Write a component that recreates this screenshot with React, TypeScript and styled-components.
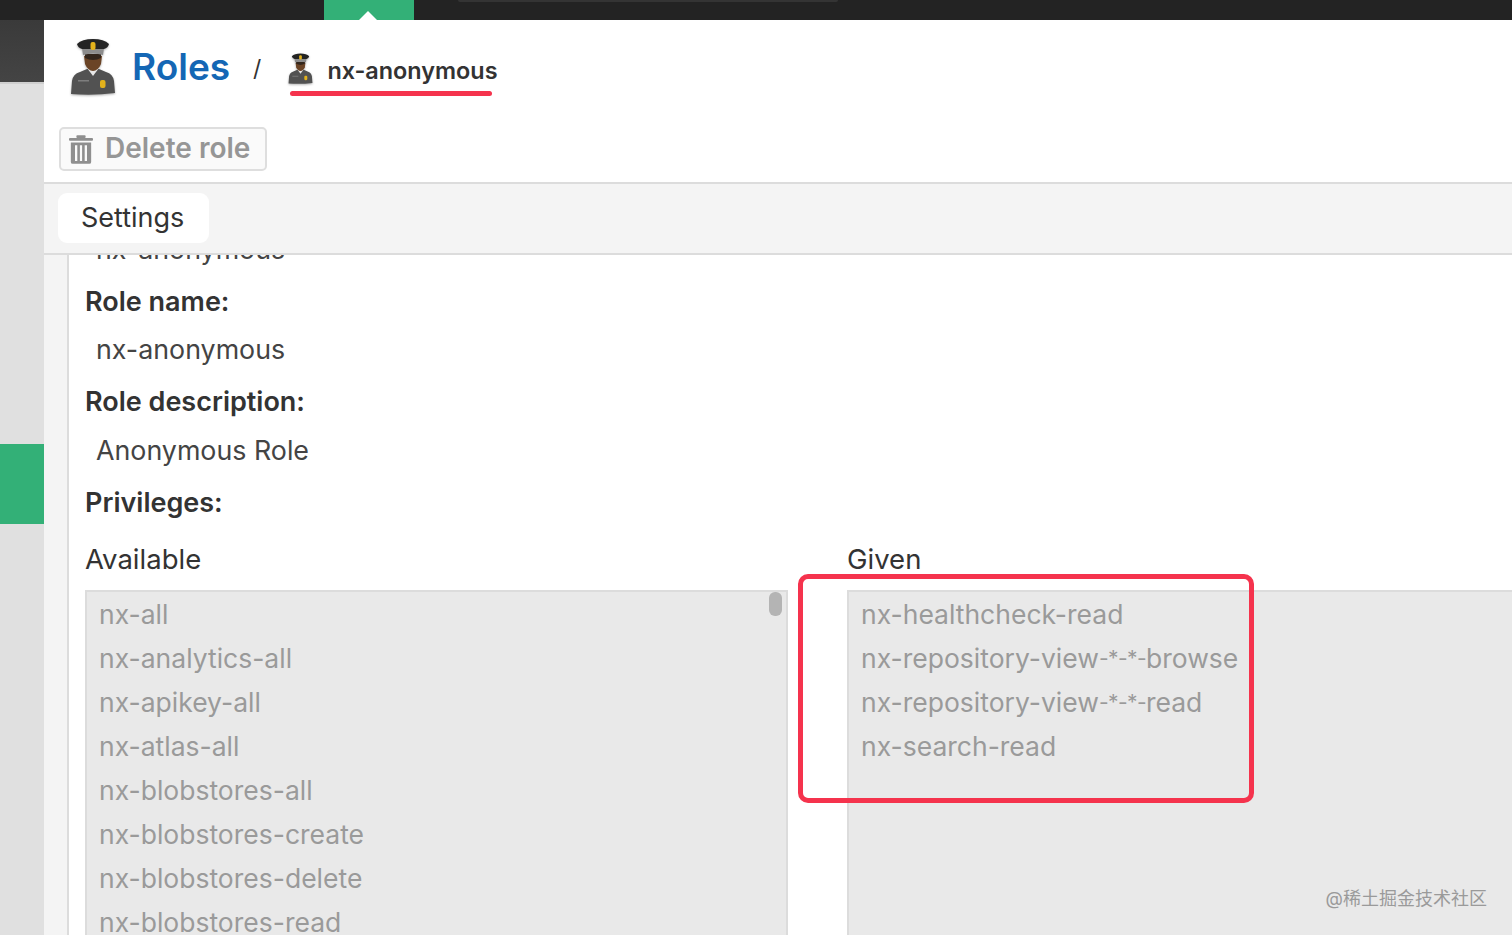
import React from "react";
import styled, { createGlobalStyle } from "styled-components";

const GlobalStyle = createGlobalStyle`
  html, body {
    margin: 0;
    padding: 0;
    height: 100%;
    overflow: hidden;
    background: #fff;
    font-family: "Inter", "Noto Sans CJK SC", sans-serif;
  }
`;

const Page = styled("div")`
  position: relative;
  width: 1512px;
  height: 935px;
  overflow: hidden;
  display: flex;
  flex-direction: column;
`;

const TopBar = styled("div")`
  flex: 0 0 20px;
  background: #232323;
  padding-left: 324px;
  display: flex;
  gap: 44px;
`;

const ActiveTab = styled("div")`
  position: relative;
  width: 90px;
  height: 20px;
  background: #33b077;
  &::after {
    content: "";
    position: absolute;
    left: 35px;
    bottom: 0;
    border-left: 9px solid transparent;
    border-right: 9px solid transparent;
    border-bottom: 9px solid #fff;
  }
`;

const SearchEdge = styled("div")`
  width: 380px;
  height: 2px;
  background: #343434;
  border-radius: 0 0 4px 4px;
`;

const Body = styled("div")`
  flex: 1;
  display: flex;
  min-height: 0;
`;

const Sidebar = styled("div")`
  flex: 0 0 44px;
  background: #e0e0e0;
  display: flex;
  flex-direction: column;
`;

const SideDark = styled("div")`
  height: 62px;
  background: linear-gradient(#3a3a3a, #444);
  border-bottom: 2px solid #cfcfcf;
`;

const SideActive = styled("div")`
  margin-top: 360px;
  height: 80px;
  background: #33b077;
`;

const Main = styled("div")`
  flex: 1;
  min-width: 0;
  display: flex;
  flex-direction: column;
`;

const Header = styled("div")`
  flex: 0 0 164px;
  box-sizing: border-box;
  background: #fff;
  border-bottom: 2px solid #dcdcdc;
  padding: 18px 0 0 15px;
`;

const Crumbs = styled("div")`
  position: relative;
  display: flex;
  align-items: center;
  height: 58px;
  margin-left: 11px;
`;

const RootTitle = styled("a")`
  margin: -2px 0 0 16px;
  font-size: 37px;
  font-weight: 600;
  color: #1467b5;
`;

const Slash = styled("span")`
  margin: 4px 27px 0 23px;
  font-size: 23px;
  color: #333;
`;

const CrumbName = styled("span")`
  margin: 7px 0 0 14px;
  font-size: 23.4px;
  font-weight: 600;
  color: #333;
`;

const Underline = styled("div")`
  position: absolute;
  left: 220px;
  top: 53px;
  width: 202px;
  height: 5px;
  border-radius: 3px;
  background: #f5334d;
`;

const DeleteButton = styled("div")`
  display: inline-flex;
  align-items: center;
  gap: 12px;
  box-sizing: border-box;
  height: 44px;
  width: 208px;
  margin-top: 31px;
  padding-left: 8px;
  background: #fafafa;
  border: 2px solid #dedede;
  border-radius: 5px;
  font-size: 28px;
  font-weight: 600;
  color: #969696;
`;

const DeleteLabel = styled("span")`
  margin-top: -3px;
`;

const TabStrip = styled("div")`
  flex: 0 0 71px;
  box-sizing: border-box;
  position: relative;
  z-index: 1;
  background: #f4f4f4;
  border-bottom: 2px solid #dcdcdc;
  padding: 9px 0 0 14px;
`;

const Tab = styled("div")`
  width: 151px;
  height: 50px;
  box-sizing: border-box;
  padding-left: 23px;
  background: #fff;
  border-radius: 9px;
  font-size: 27px;
  line-height: 50px;
  color: #333;
`;

const Content = styled("div")`
  flex: 1;
  min-height: 0;
  overflow: hidden;
  background: #f4f4f4;
  padding-left: 23px;
`;

const Panel = styled("div")`
  box-sizing: border-box;
  background: #fff;
  border-left: 2px solid #dcdcdc;
  padding-left: 16px;
`;

const FieldLabel = styled("div")`
  font-size: 27px;
  font-weight: 600;
  line-height: 34px;
  color: #333;
  margin-top: 19px;
`;

const FieldValue = styled("div")<{ $clipped?: boolean }>`
  font-size: 26.8px;
  line-height: 34px;
  color: #444;
  margin: ${(p) => (p.$clipped ? "-23.5px 0 0 11px" : "13.5px 0 0 11px")};
`;

const Columns = styled("div")`
  display: flex;
  gap: 59px;
  margin-top: 22px;
`;

const Column = styled("div")`
  flex: 0 0 703px;
`;

const ColumnTitle = styled("div")`
  font-size: 27.5px;
  line-height: 34px;
  color: #333;
  margin-bottom: 14px;
`;

const ListBox = styled("div")`
  position: relative;
  box-sizing: border-box;
  height: 400px;
  padding: 0 12px;
  background: #e9e9e9;
  border: 2px solid #dcdcdc;
`;

const ListItem = styled("div")`
  height: 44px;
  font-size: 26.5px;
  line-height: 44px;
  color: #9a9a9a;
  white-space: nowrap;
`;

// the asterisks are smaller and sit higher in the original font
const Glob = styled("span")`
  font-size: 21px;
  letter-spacing: -0.6px;
  vertical-align: 2px;
`;

const ScrollThumb = styled("div")`
  position: absolute;
  top: 0;
  right: 4px;
  width: 13px;
  height: 24px;
  border-radius: 6px;
  background: #b4b4b4;
`;

const Callout = styled("div")`
  position: absolute;
  left: 798px;
  top: 574px;
  width: 456px;
  height: 229px;
  box-sizing: border-box;
  border: 5px solid #f5334d;
  border-radius: 10px;
`;

const Watermark = styled("div")`
  position: absolute;
  right: 25px;
  top: 888px;
  font-size: 18px;
  line-height: 22px;
  color: #9a9a9a;
`;

const OfficerSvg = styled("svg")<{ $drop?: number }>`
  flex: none;
  margin-top: ${(p) => p.$drop ?? 0}px;
  filter: blur(0.5px) drop-shadow(0 1px 1px rgba(0, 0, 0, 0.3));
`;

const OfficerIcon = ({ size, drop }: { size: number; drop?: number }) => (
  <OfficerSvg $drop={drop} width={size} height={(size * 58) / 46} viewBox="0 0 46 58">
    <path d="M1 56 L2 43 Q3 36 10 34 L17 31 L29 31 L36 34 Q43 36 44 43 L45 55 Q23 58 1 56 Z" fill="#525252" />
    <path d="M17 30 L23 38 L29 30 L27 28 L19 28 Z" fill="#e8e8e8" />
    <path d="M14 18 L32 18 L31 26 Q28 33 23 33 Q18 33 15 26 Z" fill="#6b4426" />
    <path d="M15 20 Q23 24 31 20 L31 16 L15 16 Z" fill="#33261c" />
    <path d="M12 10 L34 10 L33 17 Q23 14 13 17 Z" fill="#8c8c8c" />
    <path d="M7 6 Q12 1 23 1 Q34 1 39 6 Q38 10 34 11 L12 11 Q8 10 7 6 Z" fill="#232323" />
    <rect x="20.5" y="4" width="5" height="8" rx="2" fill="#e3b21c" />
    <rect x="30" y="42" width="5.5" height="8" rx="2" fill="#e3b21c" />
    <rect x="8" y="42" width="11" height="1.5" fill="#7e7e7e" />
  </OfficerSvg>
);

const TrashIcon = () => (
  <svg width="24" height="29" viewBox="0 0 26 31" fill="#8f8f8f">
    <rect x="0" y="3" width="26" height="3" rx="1" />
    <rect x="8" y="0" width="10" height="3" rx="1" />
    <path d="M2 8 H24 V29 Q24 31 22 31 H4 Q2 31 2 29 Z M6.5 11 V28 H9 V11 Z M11.8 11 V28 H14.2 V11 Z M17 11 V28 H19.5 V11 Z" fillRule="evenodd" />
  </svg>
);

const available = [
  "nx-all",
  "nx-analytics-all",
  "nx-apikey-all",
  "nx-atlas-all",
  "nx-blobstores-all",
  "nx-blobstores-create",
  "nx-blobstores-delete",
  "nx-blobstores-read",
];

const given = [
  "nx-healthcheck-read",
  "nx-repository-view-*-*-browse",
  "nx-repository-view-*-*-read",
  "nx-search-read",
];

// splits the "-*-*-" part out of a privilege name
const renderName = (name: string) => {
  const at = name.indexOf("-*-*-");
  if (at < 0) return name;
  return (
    <>
      {name.slice(0, at)}
      <Glob>-*-*-</Glob>
      {name.slice(at + 5)}
    </>
  );
};

export default function App() {
  return (
    <Page>
      <GlobalStyle />
      <TopBar>
        <ActiveTab />
        <SearchEdge />
      </TopBar>
      <Body>
        <Sidebar>
          <SideDark />
          <SideActive />
        </Sidebar>
        <Main>
          <Header>
            <Crumbs>
              <OfficerIcon size={46} />
              <RootTitle>Roles</RootTitle>
              <Slash>/</Slash>
              <OfficerIcon size={25} drop={4} />
              <CrumbName>nx-anonymous</CrumbName>
              <Underline />
            </Crumbs>
            <DeleteButton>
              <TrashIcon />
              <DeleteLabel>Delete role</DeleteLabel>
            </DeleteButton>
          </Header>
          <TabStrip>
            <Tab>Settings</Tab>
          </TabStrip>
          <Content>
            <Panel>
              <FieldValue $clipped>nx-anonymous</FieldValue>
              <FieldLabel>Role name:</FieldLabel>
              <FieldValue>nx-anonymous</FieldValue>
              <FieldLabel>Role description:</FieldLabel>
              <FieldValue>Anonymous Role</FieldValue>
              <FieldLabel>Privileges:</FieldLabel>
              <Columns>
                <Column>
                  <ColumnTitle>Available</ColumnTitle>
                  <ListBox>
                    {available.map((name) => (
                      <ListItem key={name}>{name}</ListItem>
                    ))}
                    <ScrollThumb />
                  </ListBox>
                </Column>
                <Column>
                  <ColumnTitle>Given</ColumnTitle>
                  <ListBox>
                    {given.map((name) => (
                      <ListItem key={name}>{renderName(name)}</ListItem>
                    ))}
                  </ListBox>
                </Column>
              </Columns>
            </Panel>
          </Content>
        </Main>
      </Body>
      <Callout />
      <Watermark>@稀土掘金技术社区</Watermark>
    </Page>
  );
}
